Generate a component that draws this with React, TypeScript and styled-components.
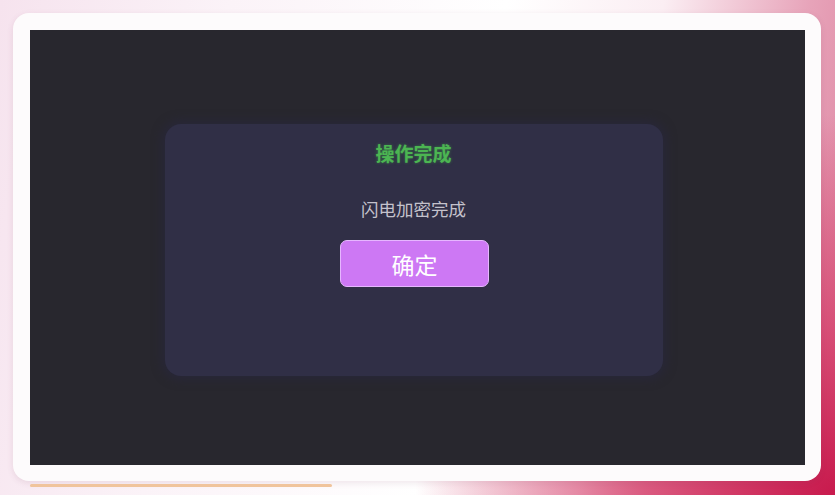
import React from 'react'
import styled, { createGlobalStyle } from 'styled-components'

const GlobalStyle = createGlobalStyle`
  html, body {
    margin: 0;
    padding: 0;
    height: 100%;
  }
  body {
    font-family: 'Noto Sans CJK SC', 'Noto Sans', sans-serif;
  }
  #root {
    height: 100%;
  }
`

const Page = styled.div`
  width: 835px;
  height: 495px;
  box-sizing: border-box;
  padding: 13px 14px 0 13px;
  display: flex;
  flex-direction: column;
  overflow: hidden;
  background:
    radial-gradient(ellipse 420px 380px at 100% 100%, #c81a4d 0%, rgba(214, 70, 112, 0.85) 45%, rgba(232, 160, 185, 0) 100%),
    linear-gradient(100deg, #f6e3ee 0%, #fbf3f8 25%, #ffffff 55%, #fbeef3 72%, #e7a3b9 88%, #dc7f9c 100%);
`

const Frame = styled.div`
  height: 468px;
  box-sizing: border-box;
  background: #fdfbfc;
  border-radius: 16px;
  padding: 17px 16px 16px 17px;
  display: flex;
  box-shadow: 0 2px 6px rgba(120, 60, 90, 0.12);
`

const Screen = styled.div`
  flex: 1;
  background: #28272e;
  display: flex;
  align-items: center;
  justify-content: center;
  padding: 5px 8px 0 0;
`

const Dialog = styled.div`
  width: 498px;
  height: 252px;
  box-sizing: border-box;
  background: #302f46;
  border-radius: 16px;
  box-shadow: 0 0 10px 4px rgba(40, 39, 56, 0.9);
  display: flex;
  flex-direction: column;
  align-items: center;
  padding-top: 16px;
`

const Title = styled.div`
  font-size: 19px;
  font-weight: 700;
  line-height: 26px;
  color: #4cb552;
  text-shadow: 0 0 3px rgba(60, 170, 70, 0.6);
`

const Message = styled.div`
  margin-top: 31px;
  font-size: 17.5px;
  line-height: 24px;
  color: #c4c2cc;
`

const ConfirmButton = styled.button`
  margin-top: 19px;
  width: 149px;
  height: 47px;
  border-radius: 7px;
  border: 1px solid #e6b6ff;
  background: #cd78f4;
  color: #ffffff;
  font-family: 'Noto Sans CJK SC', 'Noto Sans', sans-serif;
  font-size: 23px;
  cursor: pointer;
  padding: 0;
  margin-left: 2px;
`

const Progress = styled.div`
  margin: 3px 0 0 17px;
  width: 302px;
  height: 3px;
  border-radius: 2px;
  background: #f0c49c;
`

export default function App() {
  return (
    <>
      <GlobalStyle />
      <Page>
        <Frame>
          <Screen>
            <Dialog>
              <Title>操作完成</Title>
              <Message>闪电加密完成</Message>
              <ConfirmButton>确定</ConfirmButton>
            </Dialog>
          </Screen>
        </Frame>
        <Progress />
      </Page>
    </>
  )
}
